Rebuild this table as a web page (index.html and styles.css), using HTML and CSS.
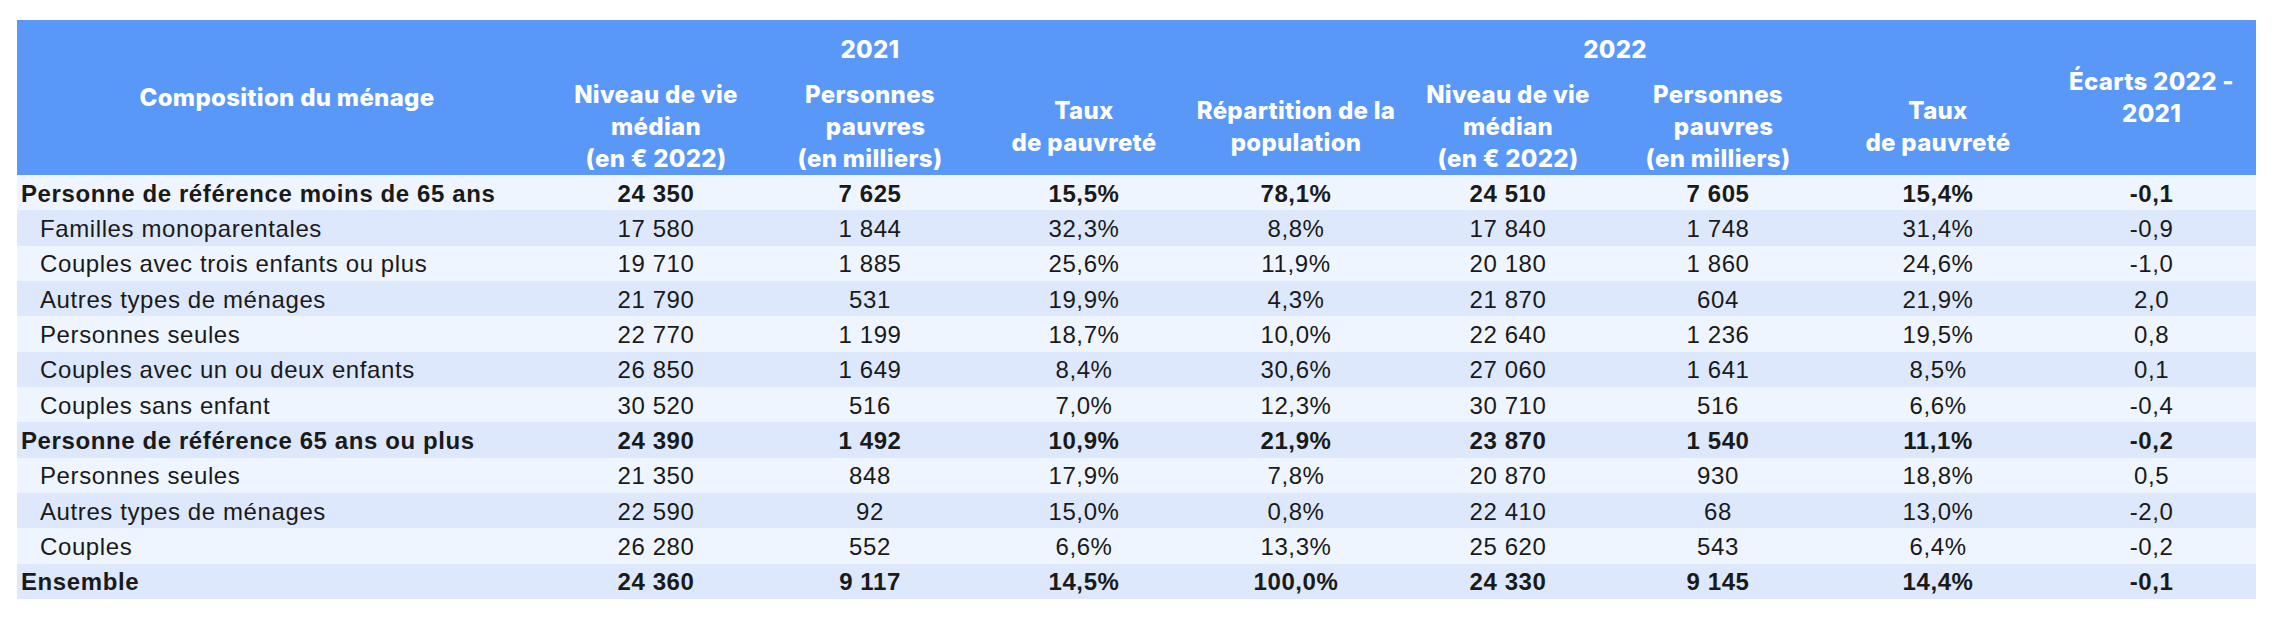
FILE: index.html
```html
<!DOCTYPE html>
<html lang="fr">
<head>
<meta charset="utf-8">
<title>Pauvreté selon la composition du ménage</title>
<link rel="stylesheet" href="styles.css">
</head>
<body>
<table class="t">
  <colgroup>
    <col class="w-lab">
    <col class="w-a">
    <col class="w-b">
    <col class="w-a">
    <col class="w-c">
    <col class="w-a">
    <col class="w-d">
    <col class="w-e">
    <col class="w-f">
  </colgroup>
  <thead>
    <tr class="h1">
      <th rowspan="2">Composition du ménage</th>
      <th colspan="3">2021</th>
      <th colspan="4">2022</th>
      <th rowspan="2">Écarts 2022 -<br>2021</th>
    </tr>
    <tr class="h2">
      <th>Niveau de vie<br>médian<br>(en € 2022)</th>
      <th>Personnes<br>&nbsp;&nbsp;pauvres<br>(en milliers)</th>
      <th>Taux<br>de pauvreté</th>
      <th>Répartition de la<br>population</th>
      <th>Niveau de vie<br>médian<br>(en € 2022)</th>
      <th>Personnes<br>&nbsp;&nbsp;pauvres<br>(en milliers)</th>
      <th>Taux<br>de pauvreté</th>
    </tr>
  </thead>
  <tbody>
    <tr class="b"><td>Personne de référence moins de 65 ans</td><td>24 350</td><td>7 625</td><td>15,5%</td><td>78,1%</td><td>24 510</td><td>7 605</td><td>15,4%</td><td>-0,1</td></tr>
    <tr class="s"><td>Familles monoparentales</td><td>17 580</td><td>1 844</td><td>32,3%</td><td>8,8%</td><td>17 840</td><td>1 748</td><td>31,4%</td><td>-0,9</td></tr>
    <tr class="s"><td>Couples avec trois enfants ou plus</td><td>19 710</td><td>1 885</td><td>25,6%</td><td>11,9%</td><td>20 180</td><td>1 860</td><td>24,6%</td><td>-1,0</td></tr>
    <tr class="s"><td>Autres types de ménages</td><td>21 790</td><td>531</td><td>19,9%</td><td>4,3%</td><td>21 870</td><td>604</td><td>21,9%</td><td>2,0</td></tr>
    <tr class="s"><td>Personnes seules</td><td>22 770</td><td>1 199</td><td>18,7%</td><td>10,0%</td><td>22 640</td><td>1 236</td><td>19,5%</td><td>0,8</td></tr>
    <tr class="s"><td>Couples avec un ou deux enfants</td><td>26 850</td><td>1 649</td><td>8,4%</td><td>30,6%</td><td>27 060</td><td>1 641</td><td>8,5%</td><td>0,1</td></tr>
    <tr class="s"><td>Couples sans enfant</td><td>30 520</td><td>516</td><td>7,0%</td><td>12,3%</td><td>30 710</td><td>516</td><td>6,6%</td><td>-0,4</td></tr>
    <tr class="b"><td>Personne de référence 65 ans ou plus</td><td>24 390</td><td>1 492</td><td>10,9%</td><td>21,9%</td><td>23 870</td><td>1 540</td><td>11,1%</td><td>-0,2</td></tr>
    <tr class="s"><td>Personnes seules</td><td>21 350</td><td>848</td><td>17,9%</td><td>7,8%</td><td>20 870</td><td>930</td><td>18,8%</td><td>0,5</td></tr>
    <tr class="s"><td>Autres types de ménages</td><td>22 590</td><td>92</td><td>15,0%</td><td>0,8%</td><td>22 410</td><td>68</td><td>13,0%</td><td>-2,0</td></tr>
    <tr class="s"><td>Couples</td><td>26 280</td><td>552</td><td>6,6%</td><td>13,3%</td><td>25 620</td><td>543</td><td>6,4%</td><td>-0,2</td></tr>
    <tr class="b"><td>Ensemble</td><td>24 360</td><td>9 117</td><td>14,5%</td><td>100,0%</td><td>24 330</td><td>9 145</td><td>14,4%</td><td>-0,1</td></tr>
  </tbody>
</table>
</body>
</html>
```

FILE: styles.css
```css
html, body {
  margin: 0;
  padding: 0;
  background: #ffffff;
}

body {
  padding: 20px 0 0 17px;
}

.t {
  border-collapse: collapse;
  border-spacing: 0;
  table-layout: fixed;
  width: 2239px;
}

.w-lab { width: 540px; }
.w-a { width: 198px; }
.w-b { width: 230px; }
.w-c { width: 226px; }
.w-d { width: 222px; }
.w-e { width: 218px; }
.w-f { width: 209px; }

.t th {
  background: #5a98f8;
  color: #ffffff;
  font-family: Inter, "Noto Sans", sans-serif;
  font-weight: 800;
  font-size: 24px;
  line-height: 31.7px;
  letter-spacing: 0.3px;
  text-align: center;
  vertical-align: middle;
  padding: 0;
  white-space: nowrap;
}

.h1 th {
  height: 59px;
}

.h2 th {
  height: 96px;
}

.t td {
  font-family: "Liberation Sans", Arial, sans-serif;
  font-size: 24px;
  letter-spacing: 0.6px;
  line-height: 1;
  color: #1a1a1a;
  text-align: center;
  vertical-align: middle;
  height: 35.33px;
  padding: 2px 0 0 0;
  box-sizing: border-box;
  white-space: nowrap;
}

.t td:first-child {
  text-align: left;
  padding-left: 23px;
}

.t tbody tr:nth-child(odd) td {
  background: #eef5ff;
}

.t tbody tr:nth-child(even) td {
  background: #dde8fc;
}

.t tr.b td {
  font-weight: 700;
}

.t tr.b td:first-child {
  padding-left: 4px;
}
```
